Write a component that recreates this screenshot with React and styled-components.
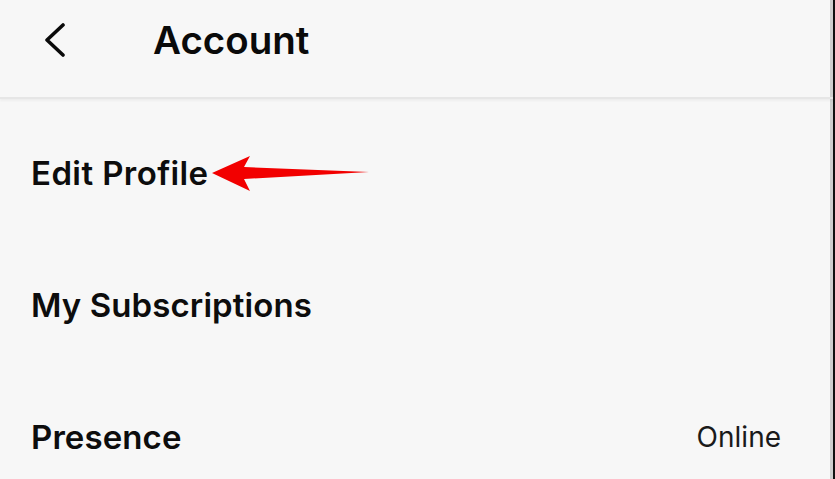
import React from "react";
import styled, { createGlobalStyle } from "styled-components";

const Global = createGlobalStyle`
  html, body { margin: 0; padding: 0; background: #f7f7f7; }
  body { font-family: Inter, "Noto Sans", sans-serif; color: #0d0d0d; }
`;

const Screen = styled.div`
  width: 835px;
  height: 479px;
  box-sizing: border-box;
  background: #f7f7f7;
  border-right: 2px solid #111;
  box-shadow: inset -3px 0 0 #cfcfcf;
  overflow: hidden;
  display: flex;
  flex-direction: column;
`;

const Header = styled.header`
  height: 99px;
  flex: none;
  display: flex;
  align-items: center;
  padding-left: 43px;
  border-bottom: 2px solid #e6e6e6;
  box-shadow: 0 2px 2px rgba(0, 0, 0, 0.04);
  box-sizing: border-box;
  padding-bottom: 17px;
`;

const BackButton = styled.button`
  border: 0;
  background: none;
  padding: 0;
  width: 24px;
  height: 34px;
  display: flex;
  align-items: center;
  justify-content: center;
  margin-right: 86px;
`;

const Title = styled.h1`
  margin: 0;
  font-size: 38.5px;
  font-weight: 600;
  letter-spacing: 0;
  color: #0a0a0a;
`;

const List = styled.div`
  display: flex;
  flex-direction: column;
  padding-top: 8px;
`;

const Row = styled.div`
  height: 132px;
  display: flex;
  align-items: center;
  justify-content: space-between;
  padding: 0 52px 0 31px;
`;

const Label = styled.span`
  font-size: 33px;
  font-weight: 600;
  letter-spacing: ${(p) => (p.$wide ? "0.4px" : "0.1px")};
  color: #0d0d0d;
`;

const Value = styled.span`
  font-size: 28px;
  font-weight: 400;
  color: #1a1a1a;
  letter-spacing: 0;
`;

const LabelWrap = styled.span`
  position: relative;
  display: inline-flex;
  align-items: center;
`;

const Arrow = styled.svg`
  position: absolute;
  left: 100%;
  top: 50%;
  margin-left: 1px;
  transform: translate(0, -50%);
  margin-top: 1px;
`;

export default function App() {
  return (
    <>
      <Global />
      <Screen>
        <Header>
          <BackButton aria-label="Back">
            <svg width="24" height="34" viewBox="0 0 24 34">
              <path d="M20 2 L4 17 L20 32" fill="none" stroke="#0a0a0a" strokeWidth="3.6" strokeLinecap="round" strokeLinejoin="round" />
            </svg>
          </BackButton>
          <Title>Account</Title>
        </Header>
        <List>
          <Row>
            <LabelWrap>
              <Label $wide>Edit Profile</Label>
              <Arrow width="160" height="40" viewBox="0 0 160 40">
                <polygon points="2,19 40,2 34,13 159,18 34,25 40,37" fill="#f20000" />
              </Arrow>
            </LabelWrap>
          </Row>
          <Row>
            <Label>My Subscriptions</Label>
          </Row>
          <Row>
            <Label>Presence</Label>
            <Value>Online</Value>
          </Row>
        </List>
      </Screen>
    </>
  );
}
